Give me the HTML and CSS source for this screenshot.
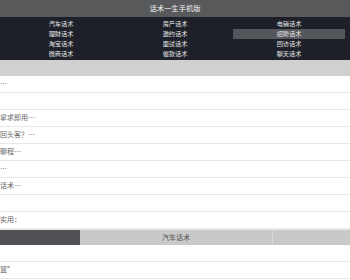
FILE: index.html
```html
<!doctype html>
<html lang="zh-CN">
<head>
  <meta charset="utf-8">
  <title>话术一生手机版</title>
  <link rel="stylesheet" href="styles.css">
</head>
<body>
<div class="header">话术一生手机版</div>
<!-- 分类导航 -->
<div class="nav">
  <a>汽车话术</a>
  <a>房产话术</a>
  <a>电销话术</a>
  <a>理财话术</a>
  <a>邀约话术</a>
  <a class="on">招聘话术</a>
  <a>淘宝话术</a>
  <a>面试话术</a>
  <a>回访话术</a>
  <a>微商话术</a>
  <a>催款话术</a>
  <a>聊天话术</a>
</div>
<div class="band"></div>
<ul class="list">
  <li>…</li>
  <li></li>
  <li>拿求即用…</li>
  <li>回头客？…</li>
  <li>聊程…</li>
  <li>…</li>
  <li>话术…</li>
  <li></li>
  <li>实用：</li>
</ul>
<div class="tabs">
  <span class="on"></span>
  <span>汽车话术</span>
  <span></span>
</div>
<ul class="list">
  <li></li>
  <li>篮”</li>
</ul>
</body>
</html>
```
FILE: styles.css
```css
* {
    margin: 0;
    padding: 0;
}
body {
    width: 350px;
    height: 280px;
    overflow: hidden;
    background-color: #fff;
    font-family: "Noto Sans CJK SC", "Noto Sans", sans-serif;
}
.header {
    height: 17px;
    line-height: 17px;
    background-color: #58595b;
    color: #f2f2f2;
    font-size: 7.3px;
    text-align: center;
}
.nav {
    background-color: #1d2029;
    padding: 2px 5px 1px;
    display: grid;
    grid-template-columns: repeat(3, 1fr);
    column-gap: 2px;
}
.nav a {
    height: 10px;
    line-height: 10px;
    color: #e8e8e8;
    font-size: 6.2px;
    text-align: center;
}
.nav a.on {
    background-color: #55565c;
}
.band {
    height: 16px;
    background-color: #d0d0d0;
}
.list {
    list-style: none;
}
.list li {
    height: 16px;
    line-height: 14px;
    border-bottom: 1px solid #e8e8e8;
    color: #666;
    font-size: 7px;
    white-space: nowrap;
}
.tabs {
    display: flex;
    height: 15px;
    border-top: 1px solid #e8e8e8;
}
.tabs span {
    flex: 0 0 192px;
    line-height: 15px;
    background-color: #c9c9c9;
    color: #555;
    font-size: 7px;
    text-align: center;
}
.tabs span.on {
    flex-basis: 80px;
    background-color: #505154;
}
.tabs span:last-child {
    flex: 1;
    border-left: 1px solid #d8d8d8;
}
```
